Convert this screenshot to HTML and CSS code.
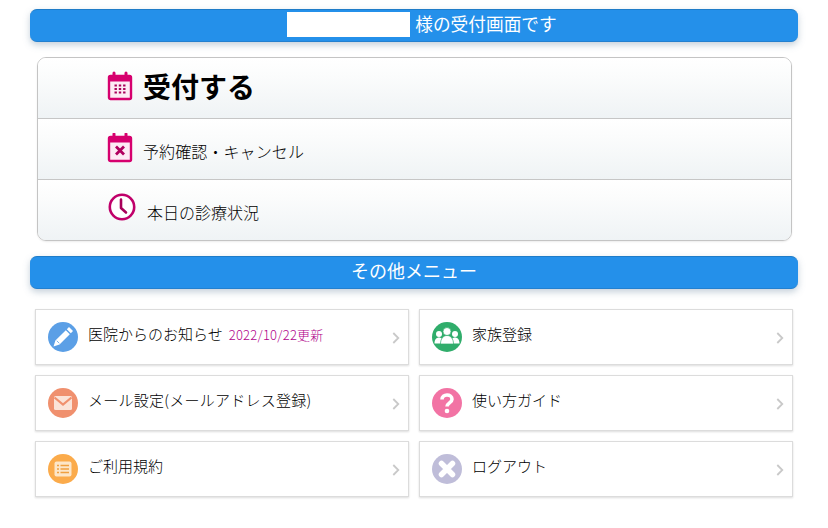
FILE: index.html
```html
<!DOCTYPE html>
<html lang="ja">
<head>
<meta charset="utf-8">
<title>受付画面</title>
<link rel="stylesheet" href="styles.css">
</head>
<body>
<main class="page">
  <h2 class="bar"><span class="name-box"></span><span class="bar-text">様の受付画面です</span></h2>
  <nav class="panel">
    <a class="row row-main">
      <svg class="row-icon" width="26" height="30" viewBox="0 0 26 30"><path d="M7 2v5M19 2v5" stroke="#d6006e" stroke-width="3" stroke-linecap="round"/><rect x="2" y="5" width="22" height="23" rx="1.5" fill="#fdeaf4" stroke="#d6006e" stroke-width="2.4"/><rect x="2" y="5" width="22" height="5.5" fill="#d6006e"/><path d="M7.500 14.500h2.400M11.800 14.500h2.400M16.100 14.500h2.400M7.500 18h2.400M11.800 18h2.400M16.100 18h2.400M7.500 21.500h2.400M11.800 21.500h2.400M16.100 21.500h2.400" stroke="#a8005a" stroke-width="2.200"/></svg>
      <span class="row-text main-text">受付する</span>
    </a>
    <a class="row row-cancel">
      <svg class="row-icon" width="26" height="30" viewBox="0 0 26 30"><path d="M7 1v5M19 1v5" stroke="#d6006e" stroke-width="3" stroke-linecap="round"/><rect x="2" y="4" width="22" height="24" rx="1.500" fill="#fdeaf4" stroke="#d6006e" stroke-width="2.400"/><rect x="2" y="4" width="22" height="5.500" fill="#d6006e"/><path d="M9 13.500l8 8M17 13.500l-8 8" stroke="#b0005e" stroke-width="2.800"/></svg>
      <span class="row-text cancel-text">予約確認・キャンセル</span>
    </a>
    <a class="row">
      <svg class="row-icon clock" width="28" height="28" viewBox="0 0 28 28"><circle cx="14" cy="14" r="12.200" fill="#fff" stroke="#c0006a" stroke-width="2.600"/><path d="M13 6.500v8.500l5 4.500" fill="none" stroke="#a8005a" stroke-width="2.600" stroke-linecap="round" stroke-linejoin="round"/></svg>
      <span class="row-text clock-text">本日の診療状況</span>
    </a>
  </nav>
  <h2 class="bar bar-menu"><span class="bar-text">その他メニュー</span></h2>
  <div class="cards">
    <a class="card">
      <svg class="card-icon" viewBox="0 0 30 30"><circle cx="15" cy="15" r="15" fill="#5b9fe6"/><path d="M21 5l4 4-2.200 2.200-4-4zM17.800 8.200l4 4-10.300 10.300-6 1.900 1.900-6z" fill="#fff"/><path d="M8.800 18.800l2.500 2.500" stroke="#5b9fe6" stroke-width=".8"/></svg>
      <span class="card-text">医院からのお知らせ<small class="date">2022/10/22更新</small></span>
      <svg class="chev" width="8" height="12" viewBox="0 0 8 12"><path d="M1.300 1l5 5-5 5" fill="none" stroke="#c9c9c9" stroke-width="1.800"/></svg>
    </a>
    <a class="card">
      <svg class="card-icon" viewBox="0 0 30 30"><circle cx="15" cy="15" r="15" fill="#30ad6b"/><g fill="#fff"><circle cx="7" cy="12" r="3"/><circle cx="23" cy="12" r="3"/><path d="M2.500 21.500c0-4 2-6 4.500-6s4.500 2 4.500 6zM18.500 21.500c0-4 2-6 4.500-6s4.500 2 4.500 6z"/></g><circle cx="15" cy="9.500" r="4" fill="#fff" stroke="#30ad6b" stroke-width=".7"/><path d="M8.500 22c0-5.500 3-8.500 6.500-8.500s6.500 3 6.500 8.500z" fill="#fff" stroke="#30ad6b" stroke-width=".7"/></svg>
      <span class="card-text">家族登録</span>
      <svg class="chev" width="8" height="12" viewBox="0 0 8 12"><path d="M1.300 1l5 5-5 5" fill="none" stroke="#c9c9c9" stroke-width="1.800"/></svg>
    </a>
    <a class="card">
      <svg class="card-icon" viewBox="0 0 30 30"><circle cx="15" cy="15" r="15" fill="#f0906e"/><rect x="6" y="8" width="18" height="14" rx="1.500" fill="#fbe3d8"/><path d="M6.500 9.500L15 16.500l8.500-7" fill="none" stroke="#f0906e" stroke-width="2.200"/></svg>
      <span class="card-text card-mail">メール設定(メールアドレス登録)</span>
      <svg class="chev" width="8" height="12" viewBox="0 0 8 12"><path d="M1.300 1l5 5-5 5" fill="none" stroke="#c9c9c9" stroke-width="1.800"/></svg>
    </a>
    <a class="card">
      <svg class="card-icon" viewBox="0 0 30 30"><circle cx="15" cy="15" r="15" fill="#f273a4"/><path d="M10 11.500c0-3 2.300-4.500 5-4.500s5 1.500 5 4.200c0 3.800-5 3.500-5 7.300" fill="none" stroke="#fff" stroke-width="3.600"/><circle cx="15" cy="23" r="2.300" fill="#fff"/></svg>
      <span class="card-text">使い方ガイド</span>
      <svg class="chev" width="8" height="12" viewBox="0 0 8 12"><path d="M1.300 1l5 5-5 5" fill="none" stroke="#c9c9c9" stroke-width="1.800"/></svg>
    </a>
    <a class="card">
      <svg class="card-icon" viewBox="0 0 30 30"><circle cx="15" cy="15" r="15" fill="#fbab4b"/><rect x="6.500" y="7.500" width="17" height="15" rx="2" fill="#fde6c8"/><path d="M9 11.500h2M12.500 11.500h8.500M9 15h2M12.500 15h8.500M9 18.500h2M12.500 18.500h8.500" stroke="#f0a040" stroke-width="1.700"/></svg>
      <span class="card-text">ご利用規約</span>
      <svg class="chev" width="8" height="12" viewBox="0 0 8 12"><path d="M1.300 1l5 5-5 5" fill="none" stroke="#c9c9c9" stroke-width="1.800"/></svg>
    </a>
    <a class="card">
      <svg class="card-icon" viewBox="0 0 30 30"><circle cx="15" cy="15" r="15" fill="#bfbdd9"/><path d="M9.500 9.500l11 11M20.500 9.500l-11 11" stroke="#fff" stroke-width="5.500" stroke-linecap="round"/></svg>
      <span class="card-text">ログアウト</span>
      <svg class="chev" width="8" height="12" viewBox="0 0 8 12"><path d="M1.300 1l5 5-5 5" fill="none" stroke="#c9c9c9" stroke-width="1.800"/></svg>
    </a>
  </div>
</main>
</body>
</html>
```
FILE: styles.css
```css
* { box-sizing: border-box; }
html, body { margin: 0; padding: 0; background: #fff; }
body {
  font-family: "Noto Sans CJK JP", "Noto Sans", sans-serif;
  color: #111;
  width: 828px;
  height: 528px;
  overflow: hidden;
}
.page { padding: 9px 30px 0; }
.bar {
  margin: 0;
  height: 33px;
  display: flex;
  align-items: center;
  justify-content: center;
  background: #2490ea;
  border-radius: 7px;
  border-top: 1px solid #1f7cc8;
  border-bottom: 1px solid #2380cf;
  box-shadow: 0 3px 7px rgba(90, 120, 150, 0.35);
  color: #fff;
  font-size: 17.700px;
  font-weight: 400;
  line-height: 1;
}
.bar-menu { margin-top: 15px; }
.name-box {
  width: 123px;
  height: 25px;
  margin: -2px 5px 0 16px;
  background: #fff;
}
.bar-text { position: relative; top: -2px; }
.bar-menu .bar-text { font-size: 18px; top: -3px; }
.panel {
  margin: 15px 6px 0 7px;
  border: 1px solid #c4c4c4;
  border-radius: 9px;
  overflow: hidden;
  box-shadow: 0 1px 2px rgba(0, 0, 0, 0.08);
}
.row {
  height: 61px;
  display: flex;
  align-items: center;
  padding-left: 69px;
  background: linear-gradient(#fff, #fbfcfc 30%, #eff3f5);
  border-bottom: 1px solid #c6c6c6;
}
.row:last-child { border-bottom: 0; height: 60px; }
.row-icon { flex: none; }
.row-main .row-icon { margin-top: -5px; }
.row-cancel .row-icon { margin-top: -2px; }
.row-text {
  margin-left: 11px;
  font-size: 16px;
  font-weight: 300;
  line-height: 1;
  margin-top: 3px;
  color: #000;
}
.row .cancel-text { margin-left: 10px; letter-spacing: 0.1px; }
.row .main-text {
  margin-left: 10px;
  font-size: 28px;
  font-weight: 700;
  color: #000;
  margin-top: -5px;
}
.clock { margin: -6px 0 0 1px; }
.clock-text { margin-left: 11px; }
.cards {
  margin: 20px 5px 0;
  display: grid;
  grid-template-columns: 374px 374px;
  grid-auto-rows: 56px;
  gap: 10px;
}
.card {
  display: flex;
  align-items: center;
  padding: 0 8px 0 12px;
  background: #fff;
  border: 1px solid #dcdcdc;
  box-shadow: 0 1px 2px rgba(0, 0, 0, 0.14);
}
.card-icon { width: 30px; height: 30px; flex: none; }
.card-text {
  flex: 1;
  margin: -7px 0 0 10px;
  font-size: 15px;
  font-weight: 300;
  line-height: 1;
  color: #000;
  white-space: nowrap;
}
.card-mail { letter-spacing: 0.25px; }
.date {
  margin-left: 6px;
  font-size: 13px;
  font-weight: 300;
  letter-spacing: 0.25px;
  color: #b0008a;
}
.chev { flex: none; margin-top: 2px; }
```
